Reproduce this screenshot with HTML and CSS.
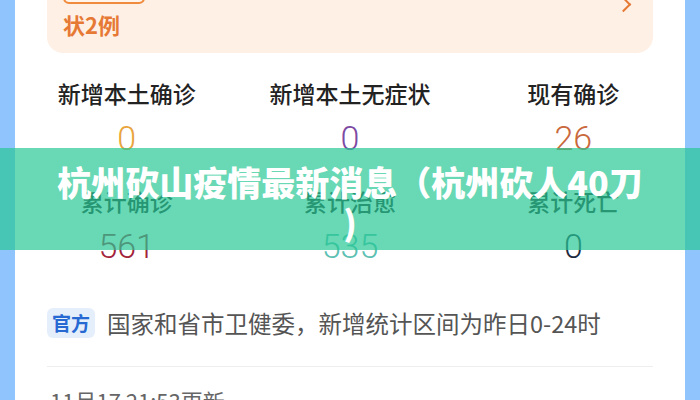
FILE: index.html
```html
<!DOCTYPE html>
<html lang="zh">
<head>
<meta charset="utf-8">
<link rel="stylesheet" href="styles.css">
</head>
<body>
<div class="panel">
  <div class="notice">
    <div class="notice-top"><span class="tag">本土</span><span class="notice-line">新增本土确诊0例，新增本土无症</span><span class="chev"></span></div>
    <div class="notice-text">状2例</div>
  </div>
  <div class="stats">
    <div class="cell"><div class="label">新增本土确诊</div><div class="num c-orange">0</div></div>
    <div class="cell"><div class="label">新增本土无症状</div><div class="num c-purple">0</div></div>
    <div class="cell"><div class="label">现有确诊</div><div class="num c-brown">26</div></div>
    <div class="cell"><div class="label">累计确诊</div><div class="num c-red">561</div></div>
    <div class="cell"><div class="label">累计治愈</div><div class="num c-teal">535</div></div>
    <div class="cell"><div class="label">累计死亡</div><div class="num c-navy">0</div></div>
  </div>
  <div class="source"><span class="badge">官方</span><span class="source-text">国家和省市卫健委，新增统计区间为昨日0-24时</span></div>
  <div class="divider"></div>
  <div class="updated">11月17 21:53更新</div>
</div>
<div class="banner"><h1 class="title">杭州砍山疫情最新消息（杭州砍人40刀)</h1></div>
</body>
</html>
```
FILE: styles.css
```css
html, body {
  margin: 0;
  padding: 0;
}
body {
  width: 700px;
  height: 400px;
  overflow: hidden;
  background: #90c4fd;
  font-family: "Noto Sans CJK SC", "Noto Sans", sans-serif;
  position: relative;
}
.panel {
  margin: 0 15px;
  height: 400px;
  background: #fff;
  overflow: hidden;
}
.notice {
  margin: -33px 32px 0;
  background: #fff0e6;
  border-radius: 16px;
  padding: 6px 18px 0 16px;
  height: 86px;
  box-sizing: border-box;
  color: #e67a35;
}
.notice-top {
  display: flex;
  align-items: center;
  height: 36px;
  gap: 10px;
}
.tag {
  border: 2px solid #f08a3c;
  border-radius: 6px;
  background: #fff5ec;
  width: 82px;
  height: 26px;
  box-sizing: border-box;
  font-size: 14px;
  line-height: 22px;
  text-align: center;
  color: #e67a35;
}
.notice-line {
  flex: 1;
  margin-bottom: 12px;
  font-size: 22px;
  line-height: 30px;
  font-weight: 700;
  color: #e67a35;
}
.chev {
  width: 9px;
  height: 9px;
  border-top: 2px solid #e67a35;
  border-right: 2px solid #e67a35;
  transform: rotate(45deg);
  margin-top: 26px;
  margin-right: 6px;
}
.notice-text {
  font-size: 22px;
  line-height: 30px;
  font-weight: 700;
  margin-top: 0;
}
.stats {
  display: grid;
  grid-template-columns: repeat(3, 1fr);
  row-gap: 27px;
  margin-top: 24px;
}
.cell {
  text-align: center;
}
.label {
  font-size: 23px;
  line-height: 32px;
  font-weight: 500;
  color: #222;
}
.num {
  margin-top: 9px;
  font-family: "Roboto", "Liberation Sans", sans-serif;
  font-size: 34px;
  line-height: 40px;
  font-weight: 300;
}
.c-orange { color: #e9a53c; }
.c-purple { color: #7d4aa3; }
.c-brown { color: #c9683c; }
.c-red { color: #a3233a; }
.c-teal { color: #5cc0b3; }
.c-navy { color: #1c2a40; }
.source {
  margin: 42px 32px 0;
  display: flex;
  align-items: center;
  gap: 12px;
}
.badge {
  width: 48px;
  height: 30px;
  border-radius: 6px;
  background: #e5effb;
  color: #2769d3;
  font-size: 19px;
  font-weight: 700;
  line-height: 30px;
  text-align: center;
}
.source-text {
  font-size: 23.5px;
  line-height: 30px;
  color: #555;
}
.divider {
  margin: 28px 32px 0;
  height: 1px;
  background: #eee;
}
.updated {
  margin: 18px 35px 0;
  font-size: 22px;
  line-height: 30px;
  color: #666;
}
.banner {
  position: absolute;
  left: 0;
  top: 148px;
  width: 700px;
  height: 102px;
  background: rgba(40, 200, 150, 0.7);
}
.title {
  margin: 0;
  padding: 14px 56px 0;
  font-size: 34px;
  line-height: 40px;
  font-weight: 900;
  color: #fff;
  text-align: center;
  line-break: anywhere;
}
```
